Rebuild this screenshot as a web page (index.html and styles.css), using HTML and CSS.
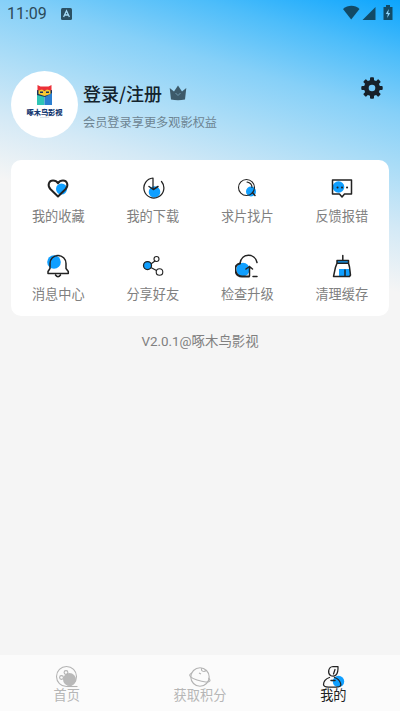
FILE: index.html
```html
<!DOCTYPE html>
<html lang="zh-CN">
<head>
<meta charset="utf-8">
<meta name="viewport" content="width=device-width, initial-scale=1">
<title>我的</title>
<link rel="stylesheet" href="styles.css">
</head>
<body>
<main class="app">
  <header class="status">
    <span class="time">11:09</span>
    <svg class="status-app" width="11" height="12" viewBox="0 0 11 12"><rect width="11" height="12" rx="1.5" fill="#2b5063"/><path d="M2.6 9 5.5 2.8 8.4 9M3.8 7h3.4" fill="none" stroke="#a5dbf7" stroke-width="1.3"/></svg>
    <svg class="status-icons" width="52" height="16" viewBox="0 0 52 16" fill="#124a66"><path d="M1 4C6-.4 13-.4 17.500 4L9.200 14.500Z"/><path d="M33.500 2v13H20.500Z"/><path d="M44 2V0h4v2h2.500v13h-9V2Z"/><path d="m46.800 4-3 5h2l-.6 4 3-5h-2Z" fill="#8bd4fc"/></svg>
  </header>
  <section class="profile">
    <div class="avatar">
      <svg width="15" height="20" viewBox="0 0 15 20"><path d="M0 10h7.500v10H0Z" fill="#2fc5b5"/><path d="M7.500 8H15v12H7.500Z" fill="#2b7fd1"/><path d="M0 5h15v3L8 12 0 10Z" fill="#18345d"/><path d="m.5 0 3 1.500h8L14.500 0v5.500H.5Z" fill="#ec3038"/><path d="M1.500 5.500 5 4.500l2.500 1.500L10 4.500l3.500 1v3.500L7.500 11l-6-2Z" fill="#f9c832"/><path d="M3 6.500h3v1.500H3Zm6 0h3v1.500H9Z" fill="#18345d"/></svg>
      <span class="brand">啄木鸟影视</span>
      <i class="brand-line"></i>
    </div>
    <div class="account">
      <div class="login">登录/注册
        <svg width="18" height="16" viewBox="0 0 18 16"><path d="m.7 3 4.300 3.500L9 .5l4 6L17.300 3 16 14.500q-7 1.500-14 0Z" fill="#3d5a6a"/><path d="m6.500 8 2.500 2.500L11.500 8" fill="none" stroke="#6f98ae"/></svg>
      </div>
      <div class="hint">会员登录享更多观影权益</div>
    </div>
    <svg class="settings" width="22" height="22" viewBox="-11 -11 22 22" fill="#17212a"><g id="teeth"><rect x="-2" y="-10.700" width="4" height="21.400" rx="1"/><rect x="-10.700" y="-2" width="21.400" height="4" rx="1"/></g><use href="#teeth" transform="rotate(45)"/><circle r="8"/><circle r="3.300" fill="#72c9fa"/></svg>
  </section>
  <section class="menu">
    <div class="item"><svg viewBox="0 0 24 24"><circle cx="15.500" cy="13" r="5.500" class="blue"/><path class="ink bold" d="M12 20.500 4.300 13C1 9 3 4.500 7 4.500c2.300 0 4 1.200 5 2.800 1-1.600 2.700-2.800 5-2.800 4 0 6 4.500 2.700 8.500Z"/></svg><span>我的收藏</span></div>
    <div class="item"><svg viewBox="0 0 24 24"><circle cx="13.500" cy="16" r="5.800" class="blue"/><path class="ink mid" d="M12 12.500V2A10 10 0 1 0 20.500 5.500"/><path class="ink" d="m8 10.500 4.300 3 4.700-3"/></svg><span>我的下载</span></div>
    <div class="item"><svg viewBox="0 0 24 24"><circle cx="16" cy="15.500" r="5" class="blue"/><circle class="ink fine" cx="11.500" cy="11.500" r="8"/><path class="ink fine" d="M12 6q5 1 5 5.500"/><path class="ink" d="m17.500 16.500 2.500 3"/></svg><span>求片找片</span></div>
    <div class="item"><svg viewBox="0 0 24 24"><circle cx="8.500" cy="11" r="5.800" class="blue"/><path class="ink" d="M2.500 4h19v14h-7L12 21l-2.500-3h-7Z"/><path class="ink bold" d="M7.500 11.500h.1m4.400 0h.1m4.900 0h.1"/></svg><span>反馈报错</span></div>
    <div class="item"><svg viewBox="0 0 24 24"><circle cx="8" cy="8" r="6.800" class="blue"/><path class="ink" d="M2 19.500V17.500l2-3V9.500a8 8 0 0 1 16 0v5l2.300 3v2ZM9.500 21q2.500 3.500 5 0"/></svg><span>消息中心</span></div>
    <div class="item"><svg viewBox="0 0 24 24"><path class="ink mid" d="m7 12 7-5M7 12l8.500 4.500"/><circle cx="6.500" cy="11.500" r="4" class="blue"/><circle class="ink mid" cx="6.500" cy="11.500" r="4"/><circle class="ink fine" cx="15.500" cy="5" r="2.500"/><circle class="ink fine" cx="18.500" cy="18" r="3.300"/></svg><span>分享好友</span></div>
    <div class="item"><svg viewBox="0 0 24 24"><circle cx="8" cy="15.500" r="6.700" class="blue"/><path class="ink bold" d="M14 22.500H7C-1 22-2 10.500 5 9.500"/><path class="ink" d="M5 9.500C6.500-1.500 20-1 22 8.500M14.500 22V12.500m-3.500 2.500 3.500-2.500 3 2.500M18 22.500h4"/></svg><span>检查升级</span></div>
    <div class="item"><svg viewBox="0 0 24 24"><path class="blue" d="M7 6.500h11v3H7Zm2 8.500h11v7H9Z"/><path class="ink" d="M12.800 6V1.500M7 6.500h11.500v2.700H7Zm0 2.700-1.500 4L3.500 22.500h16l1-1.500-1-8-1-3.800"/><path class="ink" d="M15 16v6"/></svg><span>清理缓存</span></div>
  </section>
  <p class="version">V2.0.1@啄木鸟影视</p>
  <nav class="tabs">
    <div class="tab"><svg viewBox="0 0 24 24"><circle class="line" cx="11.500" cy="11.500" r="10"/><circle cx="14.500" cy="14.500" r="6.500" fill="#b9b9b9"/><circle class="line" cx="6.500" cy="12.500" r="1.900"/><circle class="line" cx="11" cy="7.500" r="1.900"/><path class="line" d="M12 21.500h10.500"/></svg><span>首页</span></div>
    <div class="tab"><svg viewBox="0 0 24 24"><circle class="line" cx="12" cy="12" r="9.200"/><path class="line" d="M4 8C-1 10 3 13 9 15s13 3 13 .5c0-1-1-2-1.500-2.500M11 8l2 1m1-6c-2 3 2 4.500 4 2.500"/></svg><span>获取积分</span></div>
    <div class="tab active"><svg viewBox="0 0 24 24"><circle cx="17.500" cy="16.500" r="5.700" class="blue"/><path class="ink mid" d="M17 1.500h-5c-5 .5-5.500 7-2.500 9 4 2 8-.5 7.500-9Zm-3 3L12.500 9M8.500 12.500c-4 1-6 4.500-6 7 0 2 2 2.500 5 2.500h8c4 0 5-1.500 4-4-1-3-3-4.500-6-5.500"/><path class="ink" d="M10 15.500h4"/></svg><span>我的</span></div>
  </nav>
</main>
</body>
</html>
```

FILE: styles.css
```css
* { box-sizing: border-box; }
body { margin: 0; font-family: "Noto Sans CJK SC", sans-serif; }
.app {
  display: flex;
  flex-direction: column;
  height: 711px;
  background: linear-gradient(196deg, #0ca5fd 0, #4dbdfa 55px, #86d0f8 110px, #a9dcf7 160px, #d3e9f6 220px, #f5f5f5 282px) #f5f5f5;
}
.status {
  display: flex;
  align-items: center;
  height: 28px;
  padding: 0 6px 0 7px;
}
.time { font: 16px/28px Roboto, sans-serif; color: #2b4a59; width: 54px; }
.status-icons { margin-left: auto; margin-top: -3px; }
.profile {
  display: flex;
  height: 132px;
  padding: 43px 17px 0 11px;
}
.avatar {
  display: flex;
  flex-direction: column;
  align-items: center;
  width: 67px;
  height: 67px;
  padding-top: 14px;
  border-radius: 50%;
  background: #fff;
}
.brand { margin-top: 2px; font-size: 7.2px; line-height: 10px; font-weight: 900; color: #173a72; }
.brand-line { width: 9px; height: 1px; background: #dde3ea; }
.account { margin-left: 5px; padding-top: 8px; }
.login {
  display: flex;
  align-items: center;
  gap: 7px;
  font-size: 18px;
  line-height: 28px;
  font-weight: 500;
  color: #14232d;
}
.hint { margin-top: 6px; font-size: 12.2px; line-height: 18px; color: #6d8492; }
.settings { margin: 6px 0 0 auto; }
.menu {
  display: grid;
  grid-template-columns: repeat(4, 1fr);
  grid-template-rows: 78px 77px;
  height: 156px;
  margin: 0 11px;
  border-radius: 10px;
  background: #fff;
}
.item {
  display: flex;
  flex-direction: column;
  align-items: center;
  padding-top: 16px;
  font-size: 13.2px;
  line-height: 20px;
  color: #808080;
}
.item svg { width: 24px; height: 24px; margin-bottom: 6px; }
.blue { fill: #0f9fff; }
.ink { fill: none; stroke: #222; stroke-width: 1.5; stroke-linejoin: round; stroke-linecap: round; }
.mid { stroke-width: 1.25; }
.bold { stroke-width: 2; }
.fine { stroke-width: 1.1; }
.version { margin: 15px 0 0; text-align: center; font-family: Roboto, "Noto Sans CJK SC", sans-serif; font-size: 13.4px; line-height: 22px; color: #808080; }
.tabs {
  display: grid;
  grid-template-columns: repeat(3, 1fr);
  height: 56px;
  margin-top: auto;
  background: #fbfbfb;
}
.tab {
  display: flex;
  flex-direction: column;
  align-items: center;
  padding-top: 10px;
  font-size: 13.2px;
  line-height: 18px;
  color: #b6b6b6;
}
.tab svg { width: 24px; height: 24px; margin-bottom: -3px; flex: none; }
.line { fill: none; stroke: #b3b3b3; stroke-width: 1.1; }
.active { color: #222; }
```
